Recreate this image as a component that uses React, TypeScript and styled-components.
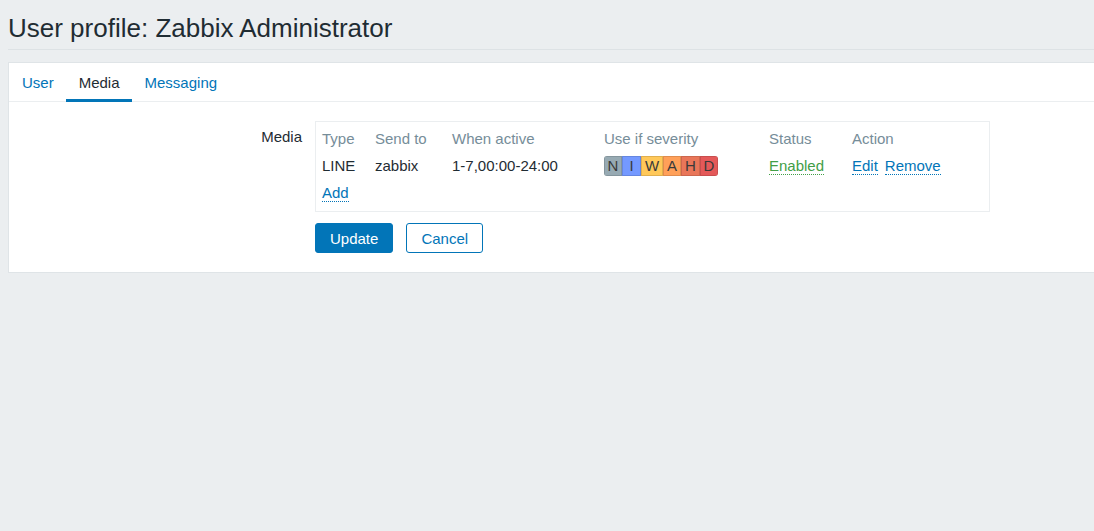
import React from "react";
import styled, { createGlobalStyle } from "styled-components";

const Global = createGlobalStyle`
  html, body { margin: 0; padding: 0; background: #ebeef0; }
  body { font-family: "Liberation Sans", Arial, sans-serif; font-size: 15px; color: #1f2c33; }
`;

const Page = styled.div`
  padding: 0 0 0 8px;
  overflow: hidden;
  min-height: 531px;
`;

const Header = styled.header`
  height: 49px;
  border-bottom: 1px solid #dde2e5;
  display: flex;
  align-items: center;
  margin-bottom: 12px;
`;

const Title = styled.h1`
  margin: 0;
  font-size: 26px;
  font-weight: normal;
  color: #1f2c33;
  line-height: 1;
  transform: translateY(3px);
`;

const Panel = styled.div`
  background: #fff;
  border: 1px solid #dfe4e7;
  margin-right: -4px;
`;

const Tabs = styled.nav`
  display: flex;
  height: 38px;
  border-bottom: 1px solid #ebeef0;
`;

const Tab = styled.a<{ $active?: boolean }>`
  display: flex;
  align-items: center;
  padding: 2px 12.5px 0;
  color: ${(p) => (p.$active ? "#1f2c33" : "#0275b8")};
  border-bottom: 3px solid ${(p) => (p.$active ? "#0275b8" : "transparent")};
  margin-bottom: -1px;
  cursor: pointer;
  &:first-child { padding-left: 13px; }
`;

const Form = styled.div`
  display: grid;
  grid-template-columns: 293px 1fr;
  column-gap: 13px;
  row-gap: 11px;
  padding: 19px 0 19px 0;
`;

const Label = styled.div`
  text-align: right;
  padding-top: 7px;
`;

const Field = styled.div`
  display: flex;
  gap: 13px;
`;

const ListBox = styled.div`
  width: 675px;
  box-sizing: border-box;
  border: 1px solid #ebeef0;
  padding: 3px 6px 5px;
`;

const Table = styled.table`
  border-collapse: collapse;
  width: 100%;
  th, td {
    text-align: left;
    padding: 0;
    height: 27px;
    vertical-align: middle;
    white-space: nowrap;
  }
  th {
    font-weight: normal;
    color: #768d99;
  }
`;

const Link = styled.a<{ $color?: string }>`
  color: ${(p) => p.$color || "#0275b8"};
  border-bottom: 1px dotted ${(p) => p.$color || "#0275b8"};
  text-decoration: none;
  cursor: pointer;
  margin-right: 7px;
`;

const Severity = styled.div`
  display: inline-flex;
  border-radius: 3px;
  overflow: hidden;
  height: 20px;
  vertical-align: middle;
`;

const Sev = styled.span<{ $bg: string; $w: number }>`
  width: ${(p) => p.$w}px;
  background: ${(p) => p.$bg};
  box-sizing: border-box;
  border: 1px solid rgba(0, 0, 0, 0.12);
  display: flex;
  align-items: center;
  justify-content: center;
  color: #3a3a3a;
  font-size: 15px;
`;

const Button = styled.button<{ $primary?: boolean }>`
  font-family: inherit;
  font-size: 15px;
  height: 30px;
  padding: 0 14px;
  border-radius: 3px;
  border: 1px solid #0275b8;
  background: ${(p) => (p.$primary ? "#0275b8" : "#fff")};
  color: ${(p) => (p.$primary ? "#fff" : "#0275b8")};
  cursor: pointer;
`;

const sevs = [
  { l: "N", bg: "#97aab3", w: 18 },
  { l: "I", bg: "#7499ff", w: 19 },
  { l: "W", bg: "#ffc859", w: 22 },
  { l: "A", bg: "#ffa059", w: 18 },
  { l: "H", bg: "#e97659", w: 19 },
  { l: "D", bg: "#e45959", w: 18 },
];

export default function App() {
  return (
    <Page>
      <Global />
      <Header>
        <Title>User profile: Zabbix Administrator</Title>
      </Header>
      <Panel>
        <Tabs>
          <Tab>User</Tab>
          <Tab $active>Media</Tab>
          <Tab>Messaging</Tab>
        </Tabs>
        <Form>
          <Label>Media</Label>
          <ListBox>
            <Table>
              <colgroup>
                <col style={{ width: 53 }} />
                <col style={{ width: 77 }} />
                <col style={{ width: 152 }} />
                <col style={{ width: 165 }} />
                <col style={{ width: 83 }} />
                <col />
              </colgroup>
              <thead>
                <tr>
                  <th>Type</th>
                  <th>Send to</th>
                  <th>When active</th>
                  <th>Use if severity</th>
                  <th>Status</th>
                  <th>Action</th>
                </tr>
              </thead>
              <tbody>
                <tr>
                  <td>LINE</td>
                  <td>zabbix</td>
                  <td>1-7,00:00-24:00</td>
                  <td>
                    <Severity>
                      {sevs.map((s) => (
                        <Sev key={s.l} $bg={s.bg} $w={s.w}>
                          {s.l}
                        </Sev>
                      ))}
                    </Severity>
                  </td>
                  <td>
                    <Link $color="#429e47">Enabled</Link>
                  </td>
                  <td>
                    <Link>Edit</Link>
                    <Link>Remove</Link>
                  </td>
                </tr>
                <tr>
                  <td colSpan={6}>
                    <Link>Add</Link>
                  </td>
                </tr>
              </tbody>
            </Table>
          </ListBox>
          <div />
          <Field>
            <Button $primary>Update</Button>
            <Button>Cancel</Button>
          </Field>
        </Form>
      </Panel>
    </Page>
  );
}
